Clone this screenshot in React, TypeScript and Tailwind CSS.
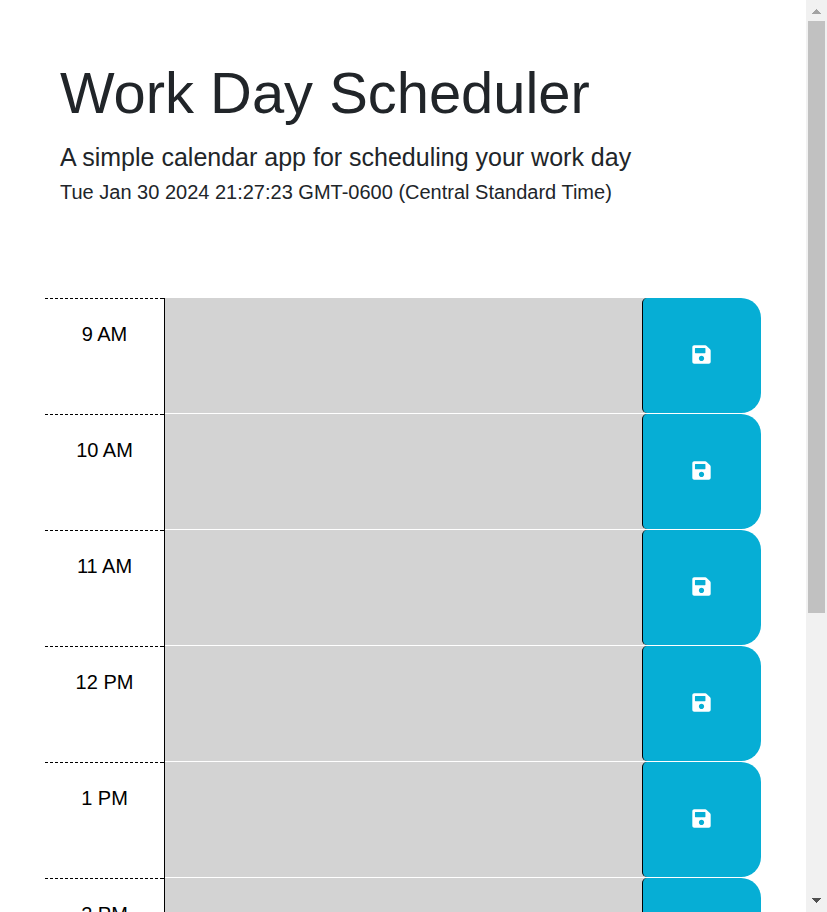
import { FaSave } from "react-icons/fa";

const hours = ["9 AM", "10 AM", "11 AM", "12 PM", "1 PM", "2 PM"];

function TimeBlock({ label }: { label: string }) {
  return (
    <div className="flex h-[116px] shrink-0">
      <div className="w-[120px] shrink-0 border-r border-black">
        <svg className="block h-px w-full" shapeRendering="crispEdges">
          <line x1="0" y1="0.5" x2="115" y2="0.5" stroke="black" strokeDasharray="3 2" />
          <line x1="115" y1="0.5" x2="119" y2="0.5" stroke="black" />
        </svg>
        <div className="pt-5 text-center text-[20px] leading-[30px] text-black">{label}</div>
      </div>
      <textarea
        aria-label={label}
        className="block h-[115px] w-[477px] shrink-0 resize-none bg-[#d3d3d3] outline-none"
      />
      <div className="h-[115px] flex-1 bg-[linear-gradient(to_right,#d3d3d3_8px,white_8px)]">
        <button
          aria-label={`Save ${label}`}
          className="flex h-full w-full items-center justify-center rounded-l-[5px] rounded-r-[20px] border-l border-black bg-[#06aed5] pr-[1px] pb-[2px] text-white"
        >
          <FaSave className="h-[21px] w-[21px]" />
        </button>
      </div>
    </div>
  );
}

function Scrollbar() {
  return (
    <div className="flex w-[21px] shrink-0 flex-col items-center bg-[#f1f1f1]">
      <svg width="21" height="21" shapeRendering="crispEdges" className="shrink-0">
        <path d="M6 14h9v-1h-1v-1h-1v-1h-1v-1h-1v-1h-1v1h-1v1h-1v1h-1v1h-1z" fill="#a3a3a3" />
      </svg>
      <div className="h-[592px] w-[17px] bg-[#c1c1c1]" />
      <svg width="21" height="21" shapeRendering="crispEdges" className="mt-auto shrink-0">
        <path d="M6 7h9v1h-1v1h-1v1h-1v1h-1v1h-1v-1h-1v-1h-1v-1h-1v-1h-1z" fill="#505050" />
      </svg>
    </div>
  );
}

export default function App() {
  return (
    <div className="flex h-screen overflow-hidden bg-white font-['Liberation_Sans',Arial,sans-serif]">
      <div className="min-w-0 flex-1 pl-[45px]">
        <header className="h-[298px] pl-[15px] pt-[59px] text-[#212529]">
          <h1 className="whitespace-nowrap text-[57.9px] leading-[69px]">Work Day Scheduler</h1>
          <p className="mt-[11px] whitespace-nowrap text-[25px] leading-[37px]">A simple calendar app for scheduling your work day</p>
          <p className="mt-px whitespace-nowrap text-[20px] leading-[30px]">
            Tue Jan 30 2024 21:27:23 GMT-0600 (Central Standard Time)
          </p>
        </header>
        <main className="w-[716px]">
          {hours.map((h) => (
            <TimeBlock key={h} label={h} />
          ))}
        </main>
      </div>
      <Scrollbar />
    </div>
  );
}
